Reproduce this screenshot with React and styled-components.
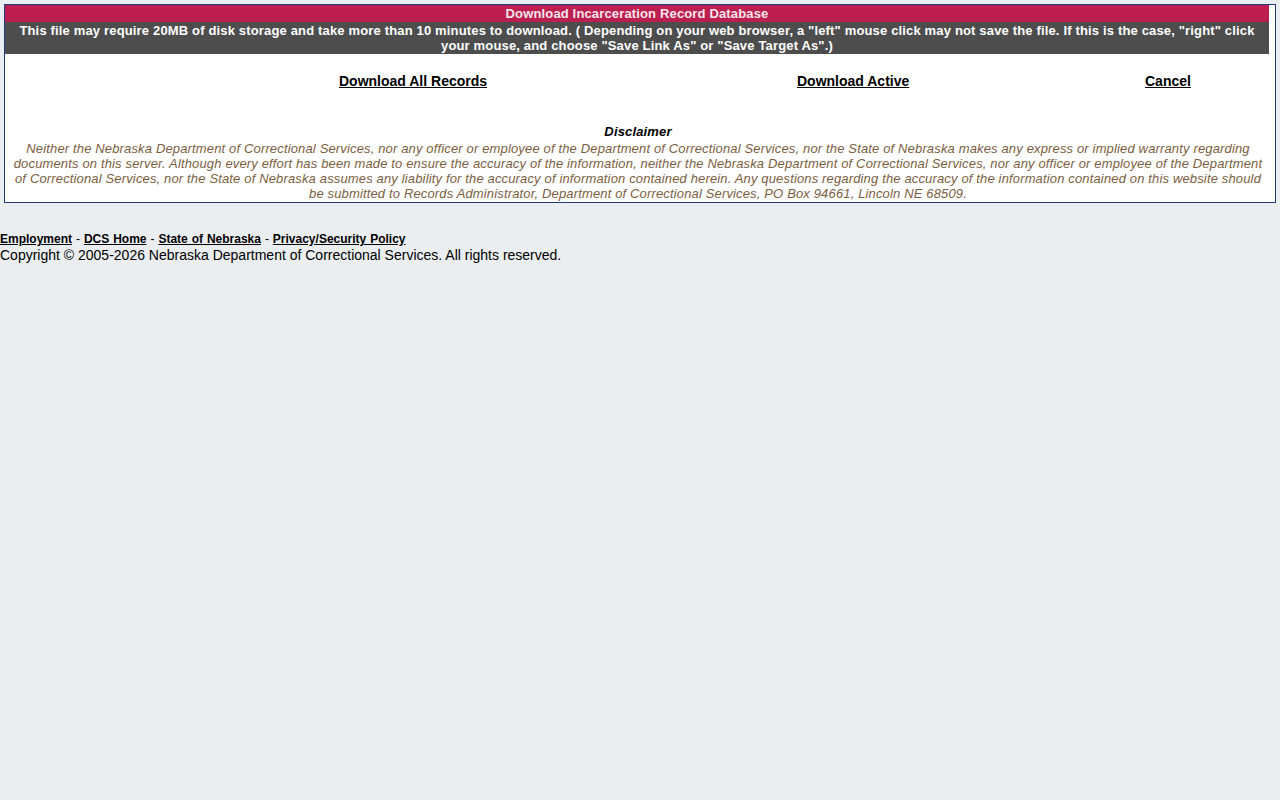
import React from 'react'
import styled, { createGlobalStyle } from 'styled-components';

const GlobalStyle = createGlobalStyle`
body {
  margin: 0;
  background: #eaeef1;
  font-family: "Liberation Sans", Arial, sans-serif;
  color: #000;
}
`;

const Panel = styled.div`
margin: 4px 4px 0 4px;
border: 1px solid #1f3b7c;
background: #fff;
padding-right: 6px;
`;

const TitleBar = styled.div`
background: #bd1e50;
color: #f6e6ec;
font-weight: bold;
font-size: 13px;
line-height: 17px;
letter-spacing: 0.15px;
text-align: center;
`;

const Notice = styled.div`
background: #4d4d4d;
color: #fff;
font-weight: bold;
font-size: 13px;
line-height: 15px;
letter-spacing: 0.16px;
text-align: center;
padding: 1px 4px 1px 4px;
`;

const LinkRow = styled.div`
display: grid;
grid-template-columns: 458px 348px auto;
padding: 18px 0 0 334px;
height: 53px;
box-sizing: border-box;
`;

const ActionLink = styled.a`
font-size: 14px;
font-weight: bold;
color: #000;
text-decoration: underline;
line-height: 16px;
`;

const Disclaimer = styled.div`
text-align: center;
padding: 17px 6px 1px 8px;
font-size: 13px;
line-height: 15px;
font-style: italic;
letter-spacing: 0.15px;

.title{
  font-weight: bold;
  color: #000;
  margin-bottom: 2px;
}

.body{
  color: #7b5e3f;
}
`;

const Footer = styled.div`
padding-top: 29px;
font-size: 14px;
line-height: 16px;
`;

const FooterLinks = styled.div`
font-size: 12px;
line-height: 15px;
word-spacing: 0.6px;

a{
  color: #000;
  font-weight: bold;
  text-decoration: underline;
}
`;

const App = () => {

  return (
    <>
      <GlobalStyle />
      <Panel>
        <TitleBar>Download Incarceration Record Database</TitleBar>
        <Notice>
          This file may require 20MB of disk storage and take more than 10 minutes to download. ( Depending on your web browser, a "left" mouse click may not save the file. If this is the case, "right" click your mouse, and choose "Save Link As" or "Save Target As".)
        </Notice>

        <LinkRow>
          <div><ActionLink href="#">Download All Records</ActionLink></div>
          <div><ActionLink href="#">Download Active</ActionLink></div>
          <div><ActionLink href="#">Cancel</ActionLink></div>
        </LinkRow>

        <Disclaimer>
          <div className="title">Disclaimer</div>
          <div className="body">
            Neither the Nebraska Department of Correctional Services, nor any officer or employee of the Department of Correctional Services, nor the State of Nebraska makes any express or implied warranty regarding documents on this server. Although every effort has been made to ensure the accuracy of the information, neither the Nebraska Department of Correctional Services, nor any officer or employee of the Department of Correctional Services, nor the State of Nebraska assumes any liability for the accuracy of information contained herein. Any questions regarding the accuracy of the information contained on this website should be submitted to Records Administrator, Department of Correctional Services, PO Box 94661, Lincoln NE 68509.
          </div>
        </Disclaimer>
      </Panel>

      <Footer>
        <FooterLinks>
          <a href="#">Employment</a> - <a href="#">DCS Home</a> - <a href="#">State of Nebraska</a> - <a href="#">Privacy/Security Policy</a>
        </FooterLinks>
        <div>Copyright © 2005-2026 Nebraska Department of Correctional Services. All rights reserved.</div>
      </Footer>
    </>
  )
}

export default App
